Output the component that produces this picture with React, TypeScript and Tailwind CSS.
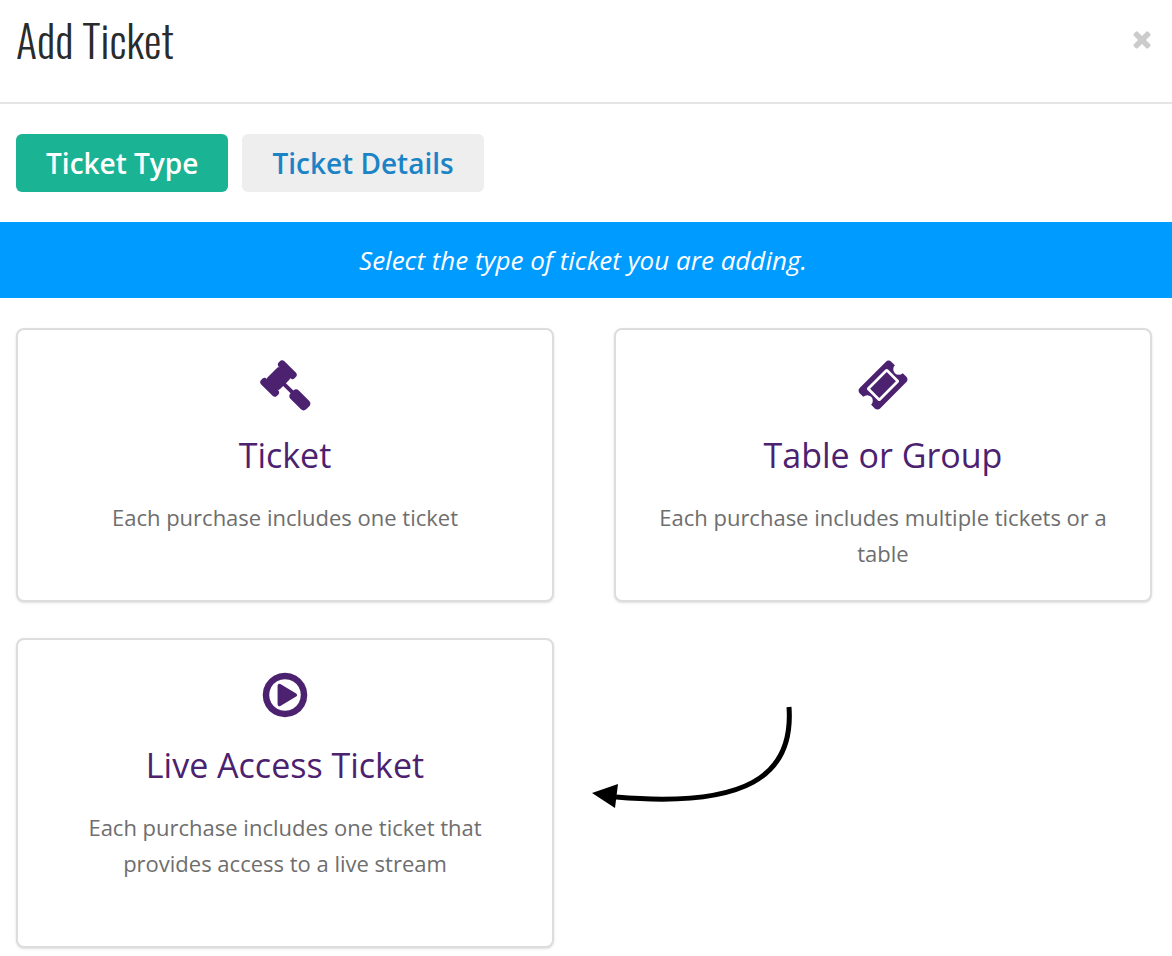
import type { ReactNode } from 'react';

const icons = {
  close:
    'M1490 1322q0 40-28 68l-136 136q-28 28-68 28t-68-28l-294-294-294 294q-28 28-68 28t-68-28l-136-136q-28-28-28-68t28-68l294-294-294-294q-28-28-28-68t28-68l136-136q28-28 68-28t68 28l294 294 294-294q28-28 68-28t68 28l136 136q28 28 28 68t-28 68l-294 294 294 294q28 28 28 68z',
  gavel:
    'M1771 1536q0 53-37 90l-107 108q-39 37-91 37-53 0-90-37l-363-364q-38-36-38-90 0-53 43-96l-256-256-126 126q-14 14-34 14t-34-14q2 2 12.5 12t12.5 13 10 11.5 10 13.5 6 13.5 5.5 16.5 1.5 18q0 38-28 68-3 3-16.5 18t-19 20.5-18.5 16.5-22 15.5-22 9-26 4.5q-40 0-68-28l-408-408q-28-28-28-68 0-13 4.5-26t9-22 15.5-22 16.5-18.5 20.5-19 18-16.5q30-28 68-28 10 0 18 1.5t16.5 5.5 13.5 6 13.5 10 11.5 10 13 12.5 12 12.5q-14-14-14-34t14-34l348-348q14-14 34-14t34 14q-2-2-12.5-12t-12.5-13-10-11.5-10-13.5-6-13.5-5.5-16.5-1.5-18q0-38 28-68 3-3 16.5-18t19-20.5 18.5-16.5 22-15.5 22-9 26-4.5q40 0 68 28l408 408q28 28 28 68 0 13-4.5 26t-9 22-15.5 22-16.5 18.5-20.5 19-18 16.5q-30 28-68 28-10 0-18-1.5t-16.5-5.5-13.5-6-13.5-10-11.5-10-13-12.5-12-12.5q14 14 14 34t-14 34l-126 126 256 256q43-43 96-43 52 0 91 37l363 363q37 39 37 91z',
  ticket:
    'M1024 452l316 316-572 572-316-316zm-211 979l618-618q19-19 19-45t-19-45l-362-362q-18-18-45-18t-45 18l-618 618q-19 19-19 45t19 45l362 362q18 18 45 18t45-18zm889-637l-907 908q-37 37-90.5 37t-90.5-37l-126-126q56-56 56-136t-56-136-136-56-136 56l-125-126q-37-37-37-90.5t37-90.5l907-906q37-37 90.5-37t90.5 37l125 125q-56 56-56 136t56 136 136 56 136-56l126 125q37 37 37 90.5t-37 90.5z',
  play:
    'M1312 896q0 37-32 55l-544 320q-15 9-32 9-16 0-32-8-32-19-32-56v-640q0-37 32-56 33-18 64 1l544 320q32 18 32 55zm128 0q0-148-73-273t-198-198-273-73-273 73-198 198-73 273 73 273 198 198 273 73 273-73 198-198 73-273zm224 0q0 209-103 385.5t-279.5 279.5-385.5 103-385.5-103-279.5-279.5-103-385.5 103-385.5 279.5-279.5 385.5-103 385.5 103 279.5 279.5 103 385.5z',
};

function Icon({ name, className }: { name: keyof typeof icons; className: string }) {
  return (
    <svg viewBox="0 0 1792 1792" fill="currentColor" aria-hidden="true" className={className}>
      <path d={icons[name]} />
    </svg>
  );
}

type CardProps = {
  icon: keyof typeof icons;
  title: string;
  children: ReactNode;
  className?: string;
};

function TicketCard({ icon, title, children, className = '' }: CardProps) {
  return (
    <button
      type="button"
      className={`flex flex-col items-center rounded-lg border-2 border-[#dddddd] bg-white px-10 pt-[29px] text-center shadow-sm ${className}`}
    >
      <Icon name={icon} className="size-[52px] text-[#4b2170]" />
      <span className="mt-5 text-[34px] leading-12 text-[#4b2170]">{title}</span>
      <span className="mt-5 text-[22px] leading-9 text-[#6e6e6e]">{children}</span>
    </button>
  );
}

export default function App() {
  return (
    <div className="bg-white font-['Open_Sans',sans-serif]">
      <header className="flex items-start justify-between border-b-2 border-[#e5e5e5] px-4 pt-3 pb-[34px]">
        <h1 className="font-['Oswald','Open_Sans_Condensed','Roboto_Condensed','Liberation_Sans_Narrow','Liberation_Sans',sans-serif] text-[44px] leading-14 font-light text-[#292b2c]">
          Add Ticket
        </h1>
        <button type="button" aria-label="Close" className="mt-3.5 mr-px text-[#cccccc]">
          <Icon name="close" className="size-[26px]" />
        </button>
      </header>

      <nav className="flex gap-3.5 px-4 py-[30px] text-[28px] leading-[58px] font-semibold">
        <button type="button" className="rounded-md bg-[#1ab394] px-[30px] text-white">
          Ticket Type
        </button>
        <button type="button" className="rounded-md bg-[#eeeeee] px-[30px] text-[#1c84c6]">
          Ticket Details
        </button>
      </nav>

      <p className="bg-[#009bff] py-5 pr-1.5 text-center text-[26px] leading-9 font-medium text-white italic">
        Select the type of ticket you are adding.
      </p>

      <main className="grid grid-cols-2 gap-x-[60px] gap-y-9 pt-[30px] pr-5 pb-2 pl-4">
        <TicketCard icon="gavel" title="Ticket" className="min-h-[274px]">
          Each purchase includes one ticket
        </TicketCard>
        <TicketCard icon="ticket" title="Table or Group" className="min-h-[274px]">
          Each purchase includes multiple tickets or a table
        </TicketCard>
        <TicketCard icon="play" title="Live Access Ticket" className="min-h-[310px]">
          Each purchase includes one ticket that provides access to a live stream
        </TicketCard>

        {/* arrow pointing at the live access card */}
        <svg viewBox="0 0 250 130" aria-hidden="true" className="mt-[52px] -ml-11 h-[130px] w-[250px]">
          <path
            d="M219 17C224 87 175 118 46 107"
            fill="none"
            stroke="#000"
            strokeWidth="5"
          />
          <path d="M22 103L48 94L45 118Z" />
        </svg>
      </main>
    </div>
  );
}
